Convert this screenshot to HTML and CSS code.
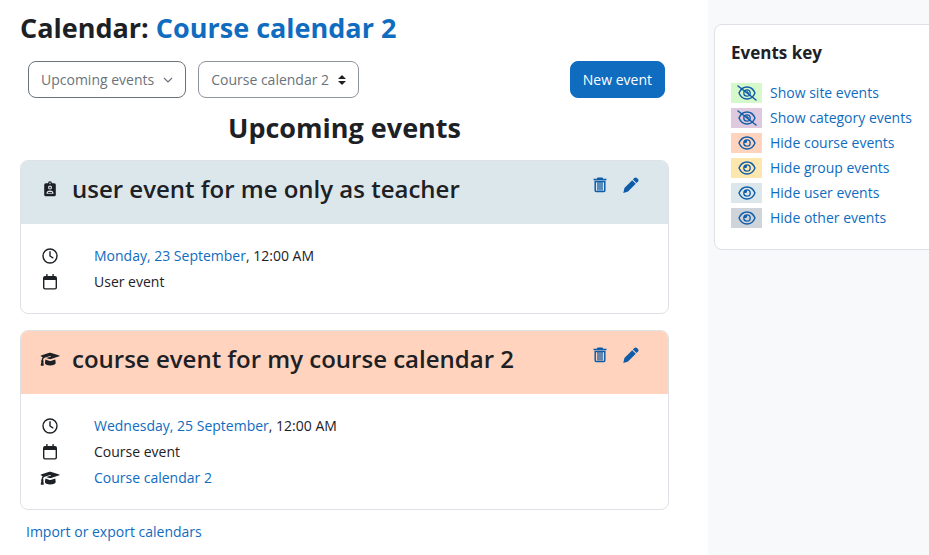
FILE: index.html
```
<!DOCTYPE html>
<html lang="en">
  <head>
    <meta charset="utf-8" />
    <meta name="viewport" content="width=device-width, initial-scale=1.0" />
    <title>Calendar: Upcoming events</title>
    <link rel="stylesheet" href="styles.css">
  </head>
  <body>
    <!-- shared icons -->
    <svg class="sprite" aria-hidden="true">
      <symbol id="icon-clock" viewBox="0 0 16 16">
        <circle cx="8" cy="8" r="7" fill="none" stroke="currentColor" stroke-width="1.4" />
        <path d="M8 3.8V8l2.8 1.8" fill="none" stroke="currentColor" stroke-width="1.4" stroke-linecap="round" stroke-linejoin="round" />
      </symbol>
      <symbol id="icon-calendar" viewBox="0 0 16 16">
        <path fill="currentColor" fill-rule="evenodd" d="M4.200.6a.7.7 0 0 1 1.400 0V2h4.800V.6a.7.7 0 0 1 1.400 0V2H13a2 2 0 0 1 2 2v9.500a2 2 0 0 1-2 2H3a2 2 0 0 1-2-2V4a2 2 0 0 1 2-2h1.200zM2.400 6v7.500c0 .4.300.7.7.7h9.800c.4 0 .7-.3.7-.7V6z" />
      </symbol>
      <symbol id="icon-cap" viewBox="0 0 20 16">
        <path fill="currentColor" d="M10.600 1.700 19.300 4.400c.5.200.5.700 0 .9L11 8.100c-.6.200-1.200.2-1.800 0L6.200 7.100l4.300-1.300c.6-.2.300-1-.3-.8L4.600 6.700C3.500 7.300 3.100 8.100 3.100 9.300c.6.4.7 1.100.2 1.600l.5 3.200c.1.400-.1.600-.5.600H1.200c-.4 0-.6-.2-.5-.6l.7-3.200c-.5-.5-.4-1.200.2-1.600.1-1.200.4-2.200 1.100-3L1 5.300c-.5-.2-.5-.7 0-.9l8.300-2.700c.4-.1.900-.1 1.300 0zM5.400 8.600l3.500 1.200c.8.300 1.700.3 2.500 0l3.900-1.300.4 3.600c0 1.400-2.500 2.500-5.500 2.500s-5.300-1.100-5.300-2.500z" />
      </symbol>
      <symbol id="icon-badge" viewBox="0 0 16 16">
        <path fill="currentColor" fill-rule="evenodd" d="M6 2.200a2 2 0 0 1 4 0h2.300A1.500 1.500 0 0 1 13.800 3.700v10a1.500 1.500 0 0 1-1.500 1.500H3.700a1.500 1.500 0 0 1-1.500-1.500v-10a1.500 1.500 0 0 1 1.500-1.500zM8 1.500a.7.7 0 1 0 0 1.400.7.7 0 0 0 0-1.400zM8 4.600a2 2 0 1 0 0 4 2 2 0 0 0 0-4zM4.500 12.800h7c0-2-1.200-3.200-3.500-3.200s-3.500 1.200-3.500 3.200z" />
        <circle cx="8" cy="6.600" r=".9" fill="currentColor" />
        <path d="M6 11.600h4" stroke="currentColor" />
      </symbol>
      <symbol id="icon-trash" viewBox="0 0 16 16">
        <path fill="currentColor" d="M5.500.5h5l.7 1.300h3.300v1.400h-13V1.800h3.300z" />
        <path fill="none" stroke="currentColor" stroke-width="1.500" d="M3.200 4.500v9c0 .7.400 1 1 1h7.600c.6 0 1-.3 1-1v-9z" />
        <path stroke="currentColor" stroke-width="1.300" d="M6 5v8.500M8 5v8.500M10 5v8.500" />
      </symbol>
      <symbol id="icon-pen" viewBox="0 0 16 16">
        <path fill="currentColor" d="M11.300 1.100a1.900 1.900 0 0 1 2.700 0l.9.900a1.900 1.900 0 0 1 0 2.700l-1.400 1.400-3.600-3.600zM9.200 3.200l3.600 3.600-7.300 7.300c-.3.300-.6.500-1 .6L.3 15.900l1-4.300c.1-.4.3-.7.600-1z" />
      </symbol>
      <symbol id="icon-eye" viewBox="0 0 20 16">
        <path d="M2 8c1.600-3.800 4.500-6 8-6s6.400 2.200 8 6c-1.600 3.800-4.500 6-8 6s-6.400-2.200-8-6z" fill="none" stroke="currentColor" stroke-width="1.400" stroke-linejoin="round" />
        <circle cx="10" cy="8" r="3.200" fill="none" stroke="currentColor" stroke-width="1.300" />
        <path d="M10 5v1.500A1.500 1.500 0 0 1 8.500 8H7a3 3 0 0 1 3-3z" fill="currentColor" />
      </symbol>
      <symbol id="icon-eye-slash" viewBox="0 0 20 16">
        <path d="M2 8c1.600-3.800 4.500-6 8-6s6.400 2.200 8 6c-1.600 3.800-4.500 6-8 6s-6.400-2.200-8-6z" fill="none" stroke="currentColor" stroke-width="1.400" stroke-linejoin="round" />
        <circle cx="10" cy="8" r="3.200" fill="none" stroke="currentColor" stroke-width="1.300" />
        <path d="M10 5.500V7l2 1.500" fill="none" stroke="currentColor" stroke-width="1.300" />
        <path d="m1 1 18 14" stroke="currentColor" stroke-width="1.500" stroke-linecap="round" />
      </symbol>
    </svg>

    <div class="page">
      <main class="content">
        <h1>Calendar: <a href="#">Course calendar 2</a></h1>

        <div class="controls">
          <button type="button" class="btn btn-outline">
            Upcoming events
            <svg class="chevron" viewBox="0 0 10 10" aria-hidden="true"><path d="m1 3 4 4 4-4" fill="none" stroke="currentColor" stroke-width="1.200" /></svg>
          </button>
          <select class="course-select" aria-label="Course">
            <option>Course calendar 2</option>
          </select>
          <button type="button" class="btn btn-primary">New event</button>
        </div>

        <h2>Upcoming events</h2>

        <article class="event">
          <header class="event-header user">
            <svg class="icon"><use href="#icon-badge" /></svg>
            <h3>user event for me only as teacher</h3>
            <div class="actions">
              <a href="#" aria-label="Delete event"><svg class="icon"><use href="#icon-trash" /></svg></a>
              <a href="#" aria-label="Edit event"><svg class="icon"><use href="#icon-pen" /></svg></a>
            </div>
          </header>
          <div class="event-body">
            <div class="row">
              <svg class="icon"><use href="#icon-clock" /></svg>
              <span><a href="#">Monday, 23 September</a>, 12:00 AM</span>
            </div>
            <div class="row">
              <svg class="icon"><use href="#icon-calendar" /></svg>
              <span>User event</span>
            </div>
          </div>
        </article>

        <article class="event">
          <header class="event-header course">
            <svg class="icon"><use href="#icon-cap" /></svg>
            <h3>course event for my course calendar 2</h3>
            <div class="actions">
              <a href="#" aria-label="Delete event"><svg class="icon"><use href="#icon-trash" /></svg></a>
              <a href="#" aria-label="Edit event"><svg class="icon"><use href="#icon-pen" /></svg></a>
            </div>
          </header>
          <div class="event-body">
            <div class="row">
              <svg class="icon"><use href="#icon-clock" /></svg>
              <span><a href="#">Wednesday, 25 September</a>, 12:00 AM</span>
            </div>
            <div class="row">
              <svg class="icon"><use href="#icon-calendar" /></svg>
              <span>Course event</span>
            </div>
            <div class="row">
              <svg class="icon"><use href="#icon-cap" /></svg>
              <a href="#">Course calendar 2</a>
            </div>
          </div>
        </article>

        <div class="footer">
          <a href="#">Import or export calendars</a>
        </div>
      </main>

      <aside class="drawer">
        <section class="block">
          <h4>Events key</h4>
          <ul class="key">
            <li><a href="#"><span class="swatch site"><svg class="icon"><use href="#icon-eye-slash" /></svg></span>Show site events</a></li>
            <li><a href="#"><span class="swatch category"><svg class="icon"><use href="#icon-eye-slash" /></svg></span>Show category events</a></li>
            <li><a href="#"><span class="swatch course"><svg class="icon"><use href="#icon-eye" /></svg></span>Hide course events</a></li>
            <li><a href="#"><span class="swatch group"><svg class="icon"><use href="#icon-eye" /></svg></span>Hide group events</a></li>
            <li><a href="#"><span class="swatch user"><svg class="icon"><use href="#icon-eye" /></svg></span>Hide user events</a></li>
            <li><a href="#"><span class="swatch other"><svg class="icon"><use href="#icon-eye" /></svg></span>Hide other events</a></li>
          </ul>
        </section>
      </aside>
    </div>
  </body>
</html>
```

FILE: styles.css
```
* {
  box-sizing: border-box;
}

body {
  margin: 0;
  font-family: "Segoe UI", "Open Sans", "Noto Sans", sans-serif;
  font-size: 14px;
  line-height: 24px;
  color: #1d2125;
  background-color: #fff;
}

a {
  color: #0f6cbf;
  text-decoration: none;
}

h1,
h2,
h3,
h4 {
  margin: 0;
  font-weight: 700;
}

.sprite {
  display: none;
}

.icon {
  width: 20px;
  height: 16px;
  flex: none;
}

.page {
  display: flex;
  min-height: 100vh;
}

.content {
  flex: 1;
  min-width: 0;
  padding: 11px 39px 0 20px;
}

h1,
h2 {
  font-size: 27px;
  line-height: 34px;
}

h2 {
  text-align: center;
  margin: 13px 0 15px;
}

/* Toolbar */
.controls {
  display: flex;
  gap: 12px;
  padding: 0 4px 0 8px;
  margin-top: 16px;
}

.btn,
.course-select {
  height: 37px;
  padding: 0 12px;
  border: 1px solid #6a737b;
  border-radius: 8px;
  font-family: inherit;
  font-size: 14px;
  color: #6a737b;
  background-color: #fff;
}

.btn-outline {
  display: flex;
  align-items: center;
  gap: 9px;
}

.chevron {
  width: 10px;
  height: 10px;
}

.course-select {
  appearance: none;
  padding-right: 29px;
  border-color: #8f959e;
  background: #fff url("data:image/svg+xml,%3Csvg xmlns='http://www.w3.org/2000/svg' viewBox='0 0 8 10'%3E%3Cpath fill='%231d2125' d='M4 0 0 4h8zM4 10 0 6h8z'/%3E%3C/svg%3E") no-repeat right 12px center / 8px 10px;
}

.btn-primary {
  margin-left: auto;
  border-color: #0f6cbf;
  color: #fff;
  background-color: #0f6cbf;
}

/* Event cards */
.event {
  margin-bottom: 16px;
  border: 1px solid #dee2e6;
  border-radius: 8px;
  overflow: hidden;
}

.event-header {
  display: flex;
  align-items: center;
  height: 63px;
  padding: 0 27px 8px 19px;
}

.event-header h3 {
  margin-left: 12px;
  font-size: 24px;
  font-weight: 600;
  line-height: 32px;
}

.actions {
  display: flex;
  gap: 11px;
  margin-left: auto;
  padding-bottom: 8px;
}

.actions a {
  display: flex;
  color: #0f5ca8;
}

.event-body {
  padding: 19px 19px 18px;
}

.row {
  display: flex;
  align-items: center;
  gap: 34px;
  min-height: 26px;
}

.footer {
  margin-top: -6px;
  padding: 0 6px;
}

/* Right drawer */
.drawer {
  flex: 0 0 221px;
  padding: 24px 0 0 6px;
  overflow: hidden;
  background-color: #f8f9fa;
}

.block {
  margin-right: -20px;
  padding: 16px;
  border: 1px solid #dee2e6;
  border-radius: 8px;
  background-color: #fff;
}

.block h4 {
  font-size: 17px;
}

.key {
  display: grid;
  gap: 1px;
  margin: 16px 0 0;
  padding: 0 0 3px;
  list-style: none;
}

.key a {
  display: flex;
  align-items: center;
  gap: 8px;
  white-space: nowrap;
}

.swatch {
  display: flex;
  align-items: center;
  justify-content: center;
  width: 31px;
  height: 20px;
  color: #0f5ca8;
}

.site {
  background-color: #d5f9cb;
}

.category {
  background-color: #dfc9df;
}

.course {
  background-color: #ffd3bd;
}

.group {
  background-color: #fee7ae;
}

.user {
  background-color: #dce7eb;
}

.other {
  background-color: #ced4da;
}
```
